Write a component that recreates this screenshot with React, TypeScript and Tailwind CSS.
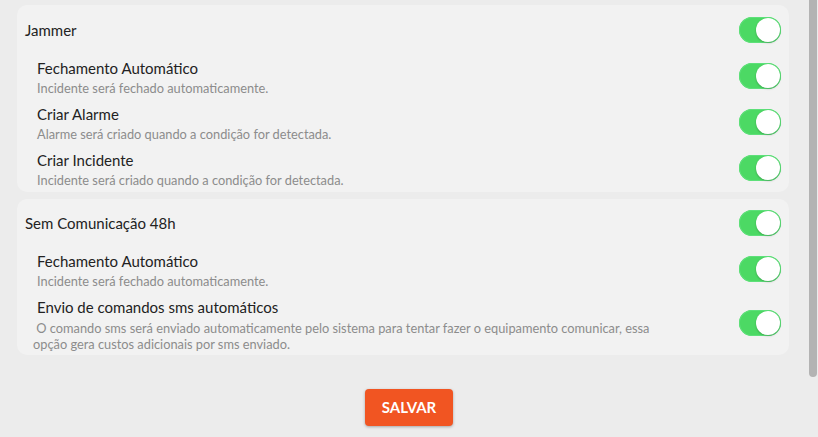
import React from "react";

function Toggle() {
  return (
    <div className="relative h-[26px] w-[42px] shrink-0 rounded-full bg-[#4cd964] shadow-[inset_0_0_0_1px_#5ee07a]">
      <div className="absolute right-[1px] top-[1px] h-[24px] w-[24px] rounded-full bg-white shadow-[0_1px_2px_rgba(0,0,0,0.25)]" />
    </div>
  );
}

function Item({ title, desc }: { title: string; desc: React.ReactNode }) {
  return (
    <div className="flex h-[46px] items-center justify-between pl-[20px] pr-[8px]">
      <div className="flex flex-col pt-[2px]">
        <div className="text-[15px] leading-[20px] text-[#222]">{title}</div>
        <div className="mt-[2px] text-[12.8px] leading-[16px] text-[#8c8c8c]">{desc}</div>
      </div>
      <Toggle />
    </div>
  );
}

function Header({ title }: { title: string }) {
  return (
    <div className="flex h-[46px] items-center justify-between pl-[8px] pr-[8px]">
      <div className="text-[15px] leading-[20px] text-[#222]">{title}</div>
      <Toggle />
    </div>
  );
}

export default function App() {
  return (
    <div
      className="flex h-[437px] w-[818px] overflow-hidden bg-[#ececec]"
      style={{ fontFamily: "Lato, 'Noto Sans', sans-serif" }}
    >
      <div className="flex w-[809px] flex-col">
        <div className="ml-[17px] mt-[5px] w-[772px] rounded-[10px] bg-[#f2f2f2] pb-[1px] pt-[2px]">
          <Header title="Jammer" />
          <Item title="Fechamento Automático" desc="Incidente será fechado automaticamente." />
          <Item title="Criar Alarme" desc="Alarme será criado quando a condição for detectada." />
          <Item title="Criar Incidente" desc="Incidente será criado quando a condição for detectada." />
        </div>
        <div className="ml-[17px] mt-[7px] w-[772px] rounded-[10px] bg-[#f2f2f2] pb-[1px] pt-[1px]">
          <Header title="Sem Comunicação 48h" />
          <Item title="Fechamento Automático" desc="Incidente será fechado automaticamente." />
          <div className="flex h-[62px] items-center justify-between pl-[20px] pr-[8px]">
            <div className="flex flex-col pt-[2px]">
              <div className="text-[15px] leading-[20px] text-[#222]">Envio de comandos sms automáticos</div>
              <div className="-ml-[4px] mt-[3px] text-[12.8px] leading-[16px] text-[#8c8c8c]">
                {"\u00a0O comando sms será enviado automaticamente pelo sistema para tentar fazer o equipamento comunicar, essa"}
                <br />
                opção gera custos adicionais por sms enviado.
              </div>
            </div>
            <Toggle />
          </div>
        </div>
        <div className="ml-[365px] mt-[34px]">
          <button className="flex h-[37px] w-[88px] items-center justify-center rounded-[4px] bg-[#f15522] text-[15px] font-bold text-white shadow-[0_1px_3px_rgba(0,0,0,0.3)]">
            SALVAR
          </button>
        </div>
      </div>
      <div className="flex w-[9px] flex-col">
        <div className="h-[377px] w-[8px] rounded-b-[4px] bg-[#b3b3b3]" />
      </div>
    </div>
  );
}
